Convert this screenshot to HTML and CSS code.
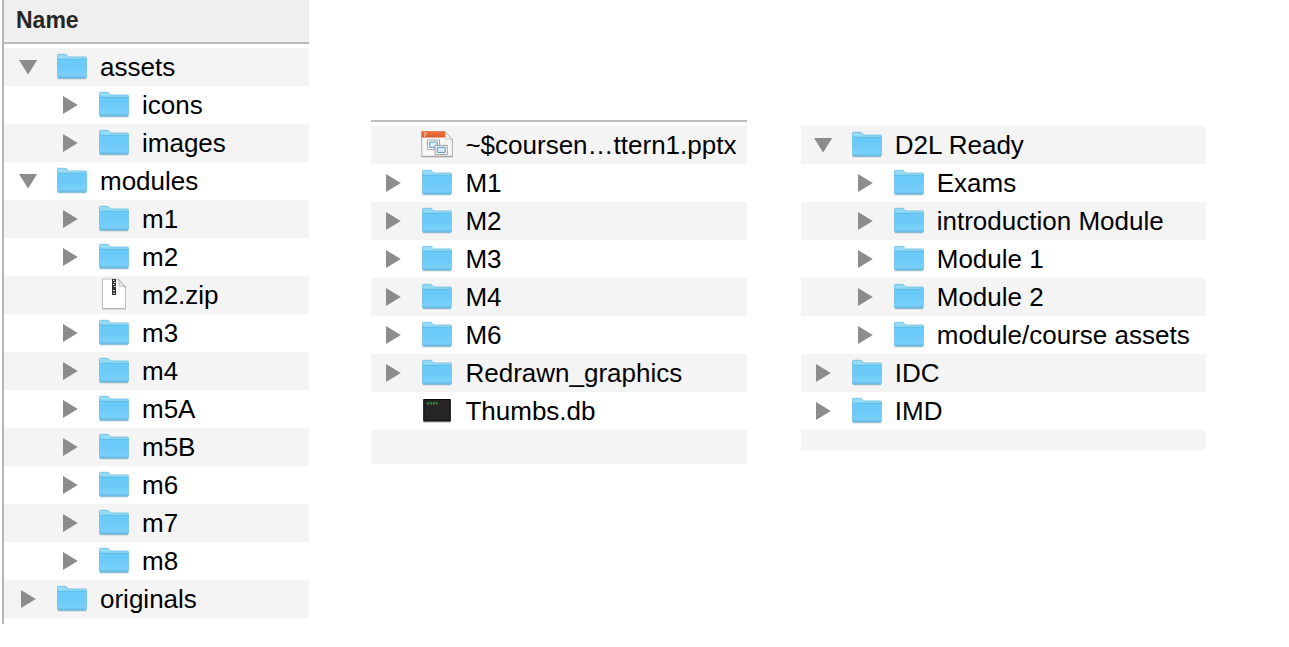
FILE: index.html
```html
<!DOCTYPE html>
<html lang="en">
<head>
<meta charset="utf-8">
<title>Course folders</title>
<link rel="stylesheet" href="styles.css">
</head>
<body>
<svg class="sprite" aria-hidden="true">
  <defs>
    <linearGradient id="folder-front" x1="0" y1="0" x2="0" y2="1">
      <stop offset="0" stop-color="#6bccf8"/>
      <stop offset="0.4" stop-color="#6ac9f8"/>
      <stop offset="1" stop-color="#7fd3fc"/>
    </linearGradient>
    <linearGradient id="ppt-band" x1="0" y1="0" x2="0" y2="1">
      <stop offset="0" stop-color="#f4743f"/>
      <stop offset="1" stop-color="#dc5a2c"/>
    </linearGradient>
    <symbol id="folder" viewBox="0 0 32 34">
      <path d="M2 28.8h28" stroke="#000" stroke-opacity=".13" stroke-width="1.4"/>
      <path d="M1.5 27V5.3Q1.5 4.3 2.5 4.3H9.3Q10.2 4.3 10.8 5L12 6.4Q12.5 7 13.4 7H29.5Q30.4 7 30.4 8V27Q30.4 28 29.4 28H2.5Q1.5 28 1.5 27Z" fill="#92dcfa" stroke="#6bb9dc" stroke-width=".8"/>
      <path d="M1.7 9.3H30.3V27.2Q30.3 27.8 29.6 27.8H2.4Q1.7 27.8 1.7 27.2Z" fill="url(#folder-front)"/>
      <path d="M1.7 9.3H30.3" stroke="#58b3dc" stroke-width=".8"/>
      <path d="M2 26.3H30" stroke="#64b9e2" stroke-width=".7"/>
      <path d="M1.8 28H30.2" stroke="#5aa6cc" stroke-width=".9"/>
    </symbol>
    <symbol id="zip" viewBox="0 0 32 34">
      <path d="M4.5 1H20.4L27.5 9V30.4H4.5Z" fill="#fff" stroke="#bdbdbd"/>
      <path d="M4.3 30.9H27.7" stroke="#a5a5a5" stroke-width=".8"/>
      <path d="M20.4 1Q22 5 21 8Q24.5 7.5 27.5 9.6Z" fill="#f1f1f1" stroke="#aaa" stroke-width=".8"/>
      <path d="M14 1H18V17H14Z" fill="#333"/>
      <path d="M15 2.5h1.5M16 4.5h1.5M15 6.5h1.5M16 8.5h1.5M15 12.5h2M15 15.2h2" stroke="#e6e6e6"/>
    </symbol>
    <symbol id="pptx" viewBox="0 0 32 34">
      <path d="M.7 3.5H24L31.4 11.5V28.3H.7Z" fill="#f7f7f7" stroke="#a9a9a9" stroke-width=".9"/>
      <path d="M.5 3.2H24V9.5H.5Z" fill="url(#ppt-band)"/>
      <path d="M3 4.8H4.7Q5.6 5.4 4.8 6.4L3.6 7.2V8.6" fill="none" stroke="#fff" stroke-width=".8"/>
      <path d="M24 3.5Q26 7.5 24.4 11Q28 10 31.4 11.8Z" fill="#fff" stroke="#aaa" stroke-width=".7"/>
      <path d="M6.5 12H18.5V21.5H6.5Z" fill="#fff" stroke="#929292" stroke-width=".8"/>
      <path d="M8.6 14H16.4V19.4H8.6Z" fill="#d8edfb" stroke="#5c9ecb"/>
      <path d="M14 17.4H26.3V26.6H14Z" fill="#fff" stroke="#888" stroke-width=".8"/>
      <path d="M16.2 19.3H24.2V24.4H16.2Z" fill="#d8edfb" stroke="#4c92c4"/>
      <path d="M.5 28.8H31.5" stroke="#969696" stroke-width=".9"/>
    </symbol>
    <symbol id="exec" viewBox="0 0 32 34">
      <path d="M2 28H30" stroke="#000" stroke-opacity=".25" stroke-width="1.4"/>
      <path d="M2 5H30V27.5H2Z" fill="#aaa"/>
      <path d="M2.8 5.5H29.2V27H2.8Z" fill="#252525" stroke="#0b0b0b"/>
      <path d="M6.2 8.6h2M6.2 10h2M9.2 8.6h2M9.2 10h2M12.2 8.6h2M12.2 10h2M15.2 8.6h1.6M15.2 10h1.6" stroke="#3f9d4b" stroke-width=".8"/>
      <path d="M6.4 8.2v2.3M10.2 8.2v2.3M12.4 8.2v2.3M15.4 8.2v2.3" stroke="#3f9d4b" stroke-width=".7"/>
    </symbol>
    <symbol id="closed" viewBox="0 0 24 24"><path d="M5 3L19.8 12L5 21Z" fill="#8c8c8c"/></symbol>
    <symbol id="open" viewBox="0 0 24 24"><path d="M3 5H21.2L12.1 19.6Z" fill="#8c8c8c"/></symbol>
  </defs>
</svg>
<main class="page">
  <section class="panel panel-site">
    <h2 class="column-head">Name</h2>
    <ul class="rows">
      <li class="row"><button class="toggle" aria-label="Collapse assets"><svg><use href="#open"/></svg></button><svg class="icon"><use href="#folder"/></svg><span>assets</span></li>
      <li class="row child"><button class="toggle" aria-label="Expand icons"><svg><use href="#closed"/></svg></button><svg class="icon"><use href="#folder"/></svg><span>icons</span></li>
      <li class="row child"><button class="toggle" aria-label="Expand images"><svg><use href="#closed"/></svg></button><svg class="icon"><use href="#folder"/></svg><span>images</span></li>
      <li class="row"><button class="toggle" aria-label="Collapse modules"><svg><use href="#open"/></svg></button><svg class="icon"><use href="#folder"/></svg><span>modules</span></li>
      <li class="row child"><button class="toggle" aria-label="Expand m1"><svg><use href="#closed"/></svg></button><svg class="icon"><use href="#folder"/></svg><span>m1</span></li>
      <li class="row child"><button class="toggle" aria-label="Expand m2"><svg><use href="#closed"/></svg></button><svg class="icon"><use href="#folder"/></svg><span>m2</span></li>
      <li class="row child"><span class="toggle"></span><svg class="icon"><use href="#zip"/></svg><span>m2.zip</span></li>
      <li class="row child"><button class="toggle" aria-label="Expand m3"><svg><use href="#closed"/></svg></button><svg class="icon"><use href="#folder"/></svg><span>m3</span></li>
      <li class="row child"><button class="toggle" aria-label="Expand m4"><svg><use href="#closed"/></svg></button><svg class="icon"><use href="#folder"/></svg><span>m4</span></li>
      <li class="row child"><button class="toggle" aria-label="Expand m5A"><svg><use href="#closed"/></svg></button><svg class="icon"><use href="#folder"/></svg><span>m5A</span></li>
      <li class="row child"><button class="toggle" aria-label="Expand m5B"><svg><use href="#closed"/></svg></button><svg class="icon"><use href="#folder"/></svg><span>m5B</span></li>
      <li class="row child"><button class="toggle" aria-label="Expand m6"><svg><use href="#closed"/></svg></button><svg class="icon"><use href="#folder"/></svg><span>m6</span></li>
      <li class="row child"><button class="toggle" aria-label="Expand m7"><svg><use href="#closed"/></svg></button><svg class="icon"><use href="#folder"/></svg><span>m7</span></li>
      <li class="row child"><button class="toggle" aria-label="Expand m8"><svg><use href="#closed"/></svg></button><svg class="icon"><use href="#folder"/></svg><span>m8</span></li>
      <li class="row"><button class="toggle" aria-label="Expand originals"><svg><use href="#closed"/></svg></button><svg class="icon"><use href="#folder"/></svg><span>originals</span></li>
    </ul>
  </section>
  <section class="panel panel-graphics">
    <ul class="rows">
      <li class="row"><span class="toggle"></span><svg class="icon"><use href="#pptx"/></svg><span>~$coursen…ttern1.pptx</span></li>
      <li class="row"><button class="toggle" aria-label="Expand M1"><svg><use href="#closed"/></svg></button><svg class="icon"><use href="#folder"/></svg><span>M1</span></li>
      <li class="row"><button class="toggle" aria-label="Expand M2"><svg><use href="#closed"/></svg></button><svg class="icon"><use href="#folder"/></svg><span>M2</span></li>
      <li class="row"><button class="toggle" aria-label="Expand M3"><svg><use href="#closed"/></svg></button><svg class="icon"><use href="#folder"/></svg><span>M3</span></li>
      <li class="row"><button class="toggle" aria-label="Expand M4"><svg><use href="#closed"/></svg></button><svg class="icon"><use href="#folder"/></svg><span>M4</span></li>
      <li class="row"><button class="toggle" aria-label="Expand M6"><svg><use href="#closed"/></svg></button><svg class="icon"><use href="#folder"/></svg><span>M6</span></li>
      <li class="row"><button class="toggle" aria-label="Expand Redrawn_graphics"><svg><use href="#closed"/></svg></button><svg class="icon"><use href="#folder"/></svg><span>Redrawn_graphics</span></li>
      <li class="row"><span class="toggle"></span><svg class="icon"><use href="#exec"/></svg><span>Thumbs.db</span></li>
    </ul>
    <div class="blank blank-tall"></div>
  </section>
  <section class="panel panel-ready">
    <ul class="rows">
      <li class="row"><button class="toggle" aria-label="Collapse D2L Ready"><svg><use href="#open"/></svg></button><svg class="icon"><use href="#folder"/></svg><span>D2L Ready</span></li>
      <li class="row child"><button class="toggle" aria-label="Expand Exams"><svg><use href="#closed"/></svg></button><svg class="icon"><use href="#folder"/></svg><span>Exams</span></li>
      <li class="row child"><button class="toggle" aria-label="Expand introduction Module"><svg><use href="#closed"/></svg></button><svg class="icon"><use href="#folder"/></svg><span>introduction Module</span></li>
      <li class="row child"><button class="toggle" aria-label="Expand Module 1"><svg><use href="#closed"/></svg></button><svg class="icon"><use href="#folder"/></svg><span>Module 1</span></li>
      <li class="row child"><button class="toggle" aria-label="Expand Module 2"><svg><use href="#closed"/></svg></button><svg class="icon"><use href="#folder"/></svg><span>Module 2</span></li>
      <li class="row child"><button class="toggle" aria-label="Expand module/course assets"><svg><use href="#closed"/></svg></button><svg class="icon"><use href="#folder"/></svg><span>module/course assets</span></li>
      <li class="row"><button class="toggle" aria-label="Expand IDC"><svg><use href="#closed"/></svg></button><svg class="icon"><use href="#folder"/></svg><span>IDC</span></li>
      <li class="row"><button class="toggle" aria-label="Expand IMD"><svg><use href="#closed"/></svg></button><svg class="icon"><use href="#folder"/></svg><span>IMD</span></li>
    </ul>
    <div class="blank"></div>
  </section>
</main>
</body>
</html>
```
FILE: styles.css
```css
* {
  box-sizing: border-box;
}

body {
  margin: 0;
  background: #fff;
  color: #000;
  font-family: "Liberation Sans", Arial, sans-serif;
  font-size: 26px;
  line-height: 38px;
}

.sprite {
  position: absolute;
  width: 0;
  height: 0;
}

.page {
  display: flex;
  align-items: flex-start;
  padding: 0 83px 0 2px;
}

.panel {
  --inset: 10px;
  min-width: 0;
}

.panel-site {
  --inset: 12px;
  flex: 306 1 0;
  padding-bottom: 6px;
  border-left: 2px solid #b5b5b5;
}

.panel-graphics {
  flex: 376 1 0;
  margin: 120px 0 0 62px;
  padding-top: 4px;
  border-top: 2px solid #bdbdbd;
}

.panel-ready {
  flex: 406 1 0;
  margin: 126px 0 0 54px;
}

.column-head {
  margin: 0 0 4px;
  padding: 0 12px 2px;
  border-bottom: 2px solid #bababa;
  background: #efefef;
  color: #262626;
  font-size: 23px;
  line-height: 40px;
}

.rows {
  margin: 0;
  padding: 0;
  list-style: none;
}

.row {
  display: flex;
  align-items: center;
  padding-left: var(--inset);
  white-space: nowrap;
}

.row:nth-child(odd),
.blank {
  background: #f4f4f4;
}

.child {
  padding-left: calc(var(--inset) + 42px);
}

.toggle {
  flex: none;
  width: 24px;
  height: 24px;
  margin-right: 16px;
  padding: 0;
  border: 0;
  background: none;
}

.toggle svg {
  display: block;
  width: 24px;
  height: 24px;
}

.icon {
  flex: none;
  width: 32px;
  height: 34px;
  margin-right: 12px;
}

.blank {
  height: 20px;
}

.blank-tall {
  height: 34px;
}
```
